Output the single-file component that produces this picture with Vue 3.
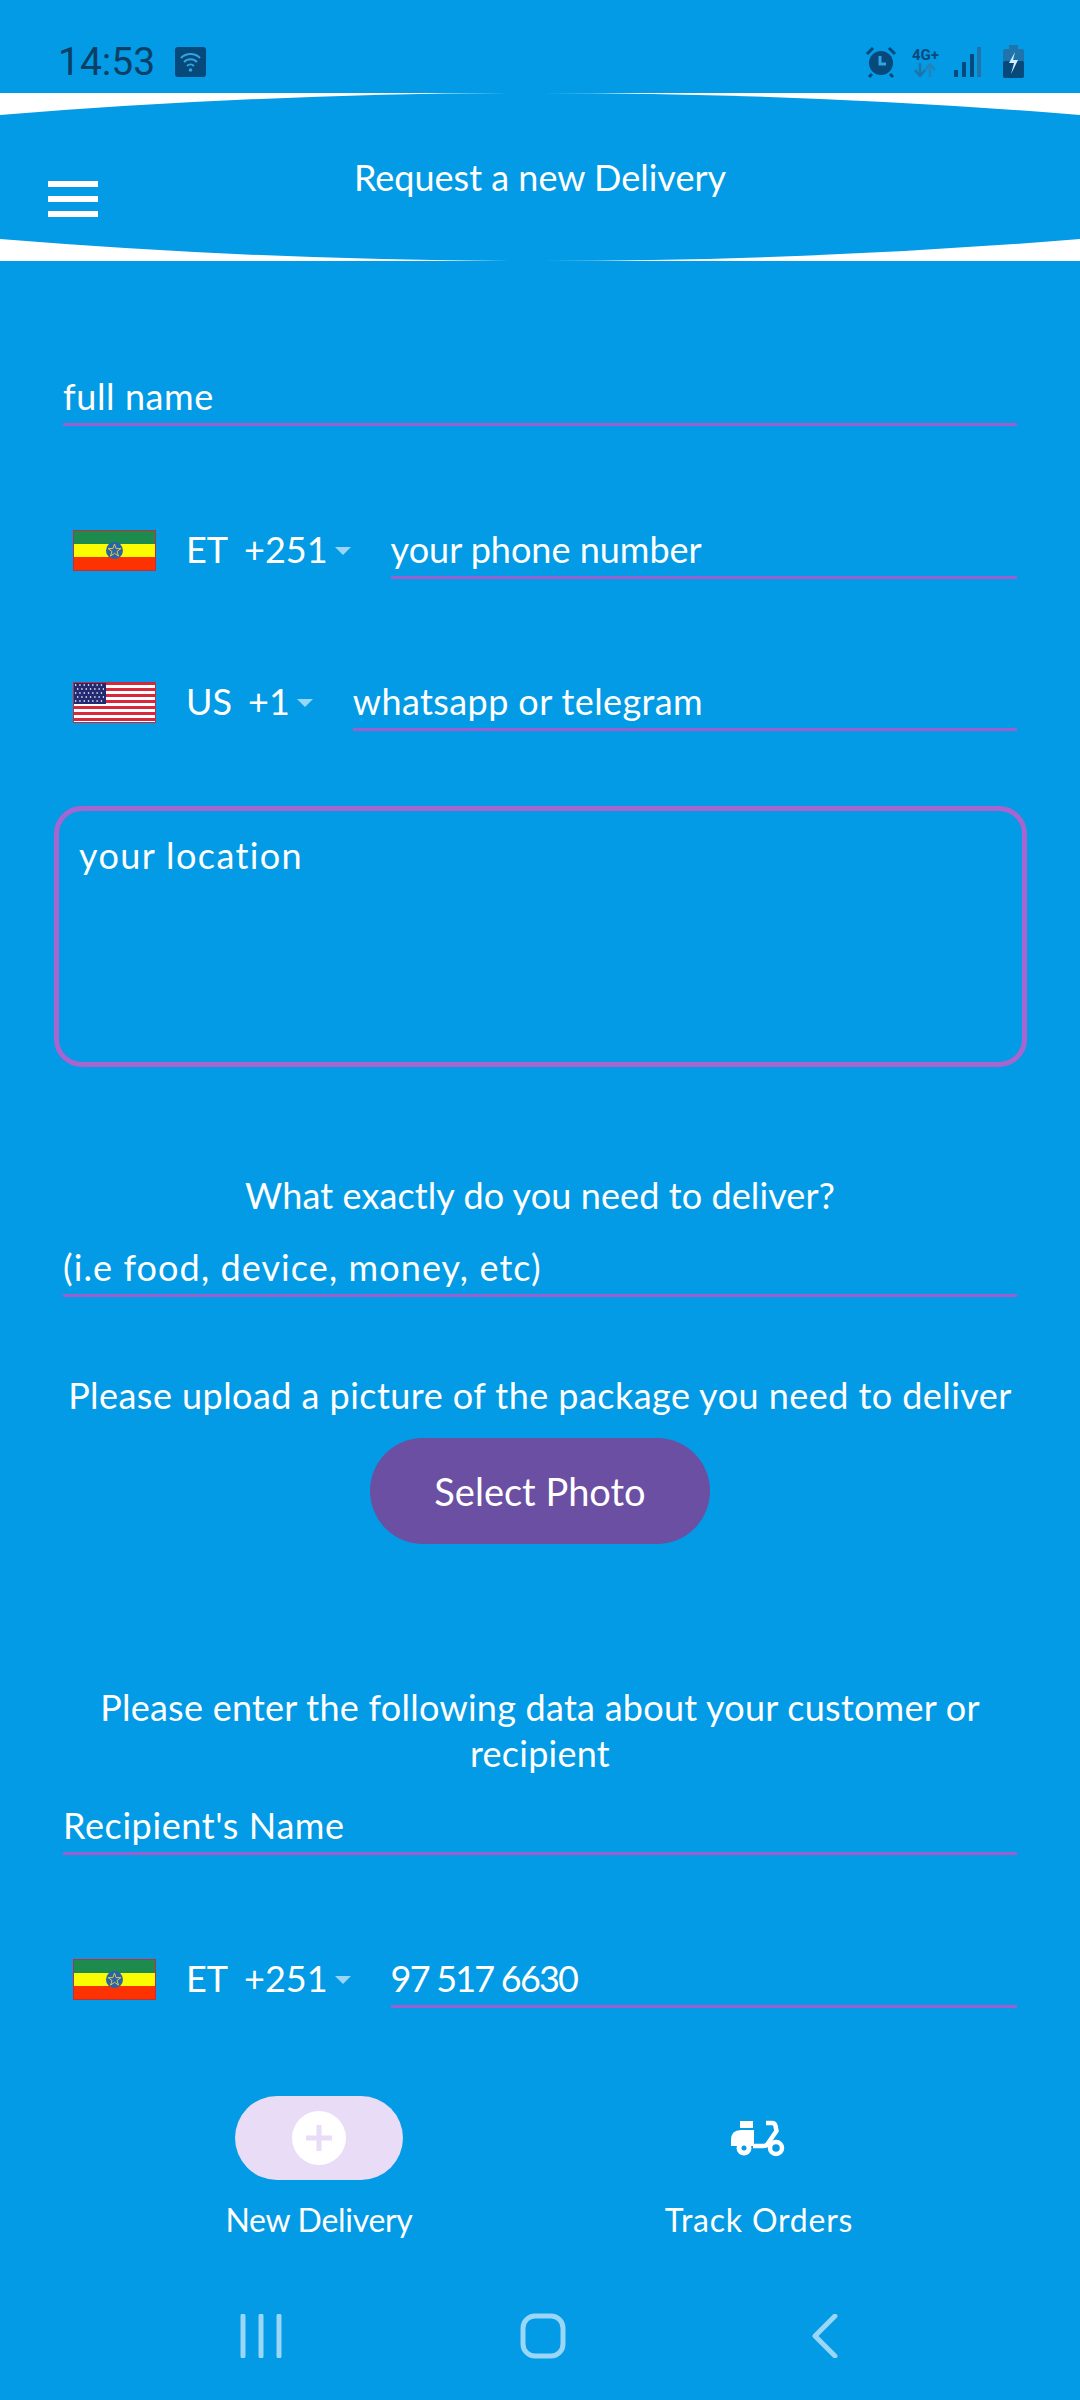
<template>
  <div class="page">
    <!-- status bar -->
    <div class="status">
      <span class="time">14:53</span>
      <svg class="wifi" width="31" height="30" viewBox="0 0 31 30">
        <rect width="31" height="30" rx="3" fill="#07497a" />
        <path d="M6 11a13.5 13.5 0 0 1 19 0M9 15a9 9 0 0 1 13 0M12 19a5 5 0 0 1 7 0" fill="none" stroke="#2fa6e0" stroke-width="2" />
        <circle cx="15.5" cy="23" r="1.8" fill="#2fa6e0" />
      </svg>
      <div class="status-right">
        <svg width="34" height="34" viewBox="0 0 34 34">
          <circle cx="17" cy="18" r="12" fill="#07497a" />
          <path d="M3 9l6-6M31 9l-6-6M8 29l-3 3M26 29l3 3" stroke="#07497a" stroke-width="3" fill="none" />
          <path d="M16 11v8h6" stroke="#2fa6e0" stroke-width="3" fill="none" />
        </svg>
        <div class="net">
          <span>4G+</span>
          <svg width="24" height="14" viewBox="0 0 24 14">
            <path d="M7 0v12M2 7l5 6 5-6" stroke="#1f74ab" stroke-width="2.5" fill="none" />
            <path d="M17 14V2M12 7l5-6 5 6" stroke="#2383bd" stroke-width="2.5" fill="none" />
          </svg>
        </div>
        <svg width="28" height="30" viewBox="0 0 28 30">
          <rect x="1" y="23" width="4" height="7" fill="#07497a" />
          <rect x="9" y="15" width="4" height="15" fill="#07497a" />
          <rect x="17" y="7" width="4" height="23" fill="#07497a" />
          <rect x="24" y="0" width="4" height="30" fill="#1f74ab" />
        </svg>
        <svg class="battery" width="21" height="33" viewBox="0 0 21 33">
          <rect x="6" y="0" width="9" height="5" fill="#1f74ab" />
          <rect x="0" y="4" width="21" height="29" rx="2" fill="#1f74ab" />
          <rect x="0" y="16" width="21" height="17" rx="2" fill="#07497a" />
          <path d="M12 7l-6 11h5l-3 11 7-14h-5z" fill="#cfeeff" />
        </svg>
      </div>
    </div>

    <!-- header -->
    <div class="header">
      <svg class="header-bg" width="1080" height="168" viewBox="0 0 1080 168">
        <path d="M0 22Q270 0 540 0Q810 0 1080 22V146Q810 168 540 168Q270 168 0 146Z" fill="#039be5" />
      </svg>
      <div class="burger"><i></i><i></i><i></i></div>
      <div class="title">Request a new Delivery</div>
    </div>

    <!-- form -->
    <div class="form">
      <div class="field first">full name</div>

      <div class="phone et">
        <svg class="flag" viewBox="0 0 83 41">
          <rect width="83" height="14" fill="#1d8a4e" />
          <rect y="14" width="83" height="14" fill="#fcfc00" />
          <rect y="27" width="83" height="14" fill="#fc3300" />
          <circle cx="41.5" cy="20.5" r="8.5" fill="#2b62ad" />
          <path d="M41.5 14l1.6 4.6h4.8l-3.9 2.9 1.5 4.6-4-2.8-4 2.8 1.5-4.6-3.9-2.9h4.8z" fill="none" stroke="#d8d040" stroke-width="1" />
          <rect x=".5" y=".5" width="82" height="40" fill="none" stroke="#c22c3c" />
        </svg>
        <span class="code">ET</span><span class="dial">+251</span>
        <i class="caret"></i>
        <div class="field grow">your phone number</div>
      </div>

      <div class="phone us">
        <svg class="flag" viewBox="0 0 83 41">
          <rect width="83" height="41" fill="#fff" />
          <path d="M0 1.5h83M0 7.5h83M0 13.5h83M0 19.5h83M0 25.5h83M0 31.5h83M0 37.5h83" stroke="#d8283c" stroke-width="3" />
          <rect width="33" height="22" fill="#232a72" />
          <path d="M2 3h29M4 7h27M2 11h29M4 15h27M2 19h29" stroke="#fff" stroke-width="1.3" stroke-dasharray="1.3 3" />
          <rect x=".5" y=".5" width="82" height="40" fill="none" stroke="#c22c3c" />
        </svg>
        <span class="code">US</span><span class="dial">+1</span>
        <i class="caret"></i>
        <div class="field grow wide">whatsapp or telegram</div>
      </div>

      <div class="location">your location</div>

      <div class="center what">What exactly do you need to deliver?</div>
      <div class="field goods wider">(i.e food, device, money, etc)</div>

      <div class="center upload">Please upload a picture of the package you need to deliver</div>
      <button class="select">Select Photo</button>

      <div class="center enter">Please enter the following data about your customer or recipient</div>
      <div class="field goods">Recipient's Name</div>

      <div class="phone et">
        <svg class="flag" viewBox="0 0 83 41">
          <rect width="83" height="14" fill="#1d8a4e" />
          <rect y="14" width="83" height="14" fill="#fcfc00" />
          <rect y="27" width="83" height="14" fill="#fc3300" />
          <circle cx="41.5" cy="20.5" r="8.5" fill="#2b62ad" />
          <path d="M41.5 14l1.6 4.6h4.8l-3.9 2.9 1.5 4.6-4-2.8-4 2.8 1.5-4.6-3.9-2.9h4.8z" fill="none" stroke="#d8d040" stroke-width="1" />
          <rect x=".5" y=".5" width="82" height="40" fill="none" stroke="#c22c3c" />
        </svg>
        <span class="code">ET</span><span class="dial">+251</span>
        <i class="caret"></i>
        <div class="field grow digits">97 517 6630</div>
      </div>
    </div>

    <!-- tabs -->
    <div class="tabs">
      <div class="tab">
        <div class="pill">
          <svg width="54" height="54" viewBox="0 0 54 54">
            <circle cx="27" cy="27" r="27" fill="#fff" />
            <path d="M27 14v26M14 27h26" stroke="#e8dcf6" stroke-width="5" />
          </svg>
        </div>
        <div class="tab-label new">New Delivery</div>
      </div>
      <div class="tab">
        <div class="pill plain">
          <svg class="scooter" width="60" height="40" viewBox="0 0 60 40">
            <path d="M11 3h13v7H11zM12 12h13v16H2v-6q0-10 10-10z" fill="#fff" />
            <circle cx="15" cy="30" r="7.5" fill="#fff" />
            <circle cx="15" cy="30" r="2.5" fill="#039be5" />
            <path d="M37 5h6q3 0 3.500 3l1 5-9 13q-1 2-4 2H24" fill="none" stroke="#fff" stroke-width="4.500" stroke-linejoin="round" />
            <circle cx="47" cy="30" r="6" fill="none" stroke="#fff" stroke-width="4.500" />
          </svg>
        </div>
        <div class="tab-label">Track Orders</div>
      </div>
    </div>

    <!-- android nav -->
    <div class="nav">
      <svg width="42" height="44" viewBox="0 0 42 44">
        <path d="M3 2v40M21 2v40M39 2v40" stroke="#9ad6f5" stroke-width="5" stroke-linecap="round" />
      </svg>
      <svg width="46" height="46" viewBox="0 0 46 46">
        <rect x="3" y="3" width="40" height="40" rx="12" fill="none" stroke="#9ad6f5" stroke-width="5" />
      </svg>
      <svg width="26" height="44" viewBox="0 0 26 44">
        <path d="M23 2L3 22l20 20" fill="none" stroke="#9ad6f5" stroke-width="5" stroke-linecap="round" stroke-linejoin="round" />
      </svg>
    </div>
  </div>
</template>

<script setup>
</script>

<style>
html,
body {
  margin: 0;
  background: #039be5;
}
</style>

<style scoped>
.page {
  width: 1080px;
  height: 2400px;
  overflow: hidden;
  background: #039be5;
  color: #fff;
  font-family: Lato, "Open Sans", sans-serif;
  font-size: 36px;
  line-height: 48px;
  letter-spacing: 0.6px;
}

.status {
  height: 93px;
  display: flex;
  align-items: center;
  padding: 30px 56px 0 58px;
  box-sizing: border-box;
  letter-spacing: 0;
}
.time {
  font-family: Roboto, sans-serif;
  font-size: 39px;
  color: #0b3f66;
}
.wifi {
  margin-left: 20px;
}
.status-right {
  margin-left: auto;
  display: flex;
  align-items: center;
  gap: 14px;
}
.net {
  display: flex;
  flex-direction: column;
  align-items: center;
  font-family: Roboto, sans-serif;
  font-weight: 700;
  font-size: 15px;
  line-height: 16px;
  color: #07497a;
}
.battery {
  margin-left: 8px;
}

.header {
  position: relative;
  height: 168px;
  background: #fff;
}
.header-bg {
  position: absolute;
  inset: 0;
}
.burger {
  position: absolute;
  left: 48px;
  top: 88px;
  width: 50px;
  display: flex;
  flex-direction: column;
  gap: 9px;
}
.burger i {
  height: 6px;
  background: #fff;
}
.title {
  position: relative;
  padding-top: 60px;
  text-align: center;
  letter-spacing: 0;
}

.form {
  padding-top: 111px;
}
.field {
  height: 51px;
  border-bottom: 3px solid #9c5fd0;
  white-space: nowrap;
}
.first,
.goods {
  margin: 0 63px;
}
.goods {
  margin-top: 25px;
}
.wider {
  letter-spacing: 1.1px;
}
.grow {
  flex: 1;
}
.wide {
  letter-spacing: 0.4px;
}
.digits {
  letter-spacing: -1.8px;
}

.phone {
  display: flex;
  align-items: flex-start;
  margin: 98px 63px 0 73px;
  letter-spacing: 0;
}
.et {
  margin-top: 99px;
}
.flag {
  width: 83px;
  height: 41px;
  margin-top: 5px;
  flex: none;
}
.code {
  margin-left: 30px;
}
.dial {
  margin-left: 16px;
}
.caret {
  width: 0;
  height: 0;
  margin: 22px 40px 0 7px;
  border-left: 8px solid transparent;
  border-right: 8px solid transparent;
  border-top: 8px solid #9ad6f5;
  flex: none;
}

.location {
  margin: 75px 53px 0 54px;
  height: 261px;
  box-sizing: border-box;
  border: 5px solid #a864cf;
  border-radius: 28px;
  padding: 20px 20px;
  letter-spacing: 1.4px;
}

.center {
  margin: 0 60px;
  text-align: center;
  line-height: 46px;
  letter-spacing: 0.25px;
}
.what {
  margin-top: 105px;
  letter-spacing: 0.1px;
}
.upload {
  margin-top: 75px;
  letter-spacing: 0.45px;
}
.enter {
  margin-top: 140px;
}
.select {
  display: block;
  margin: 20px auto 0;
  width: 340px;
  height: 106px;
  border: 0;
  border-radius: 53px;
  background: #6a4fa3;
  color: #fff;
  font: inherit;
  font-size: 38px;
}

.tabs {
  display: flex;
  padding: 88px 0 0 99px;
}
.tab {
  width: 440px;
  display: flex;
  flex-direction: column;
  align-items: center;
}
.pill {
  width: 168px;
  height: 84px;
  border-radius: 42px;
  background: #e8dcf6;
  display: flex;
  align-items: center;
  justify-content: center;
}
.plain {
  background: none;
}
.tab-label {
  margin-top: 20px;
  font-size: 32px;
  line-height: 40px;
  letter-spacing: 0.8px;
}
.new {
  letter-spacing: -0.3px;
}

.nav {
  display: grid;
  grid-template-columns: repeat(3, 282px);
  justify-items: center;
  align-items: center;
  padding: 73px 0 0 120px;
}
</style>
